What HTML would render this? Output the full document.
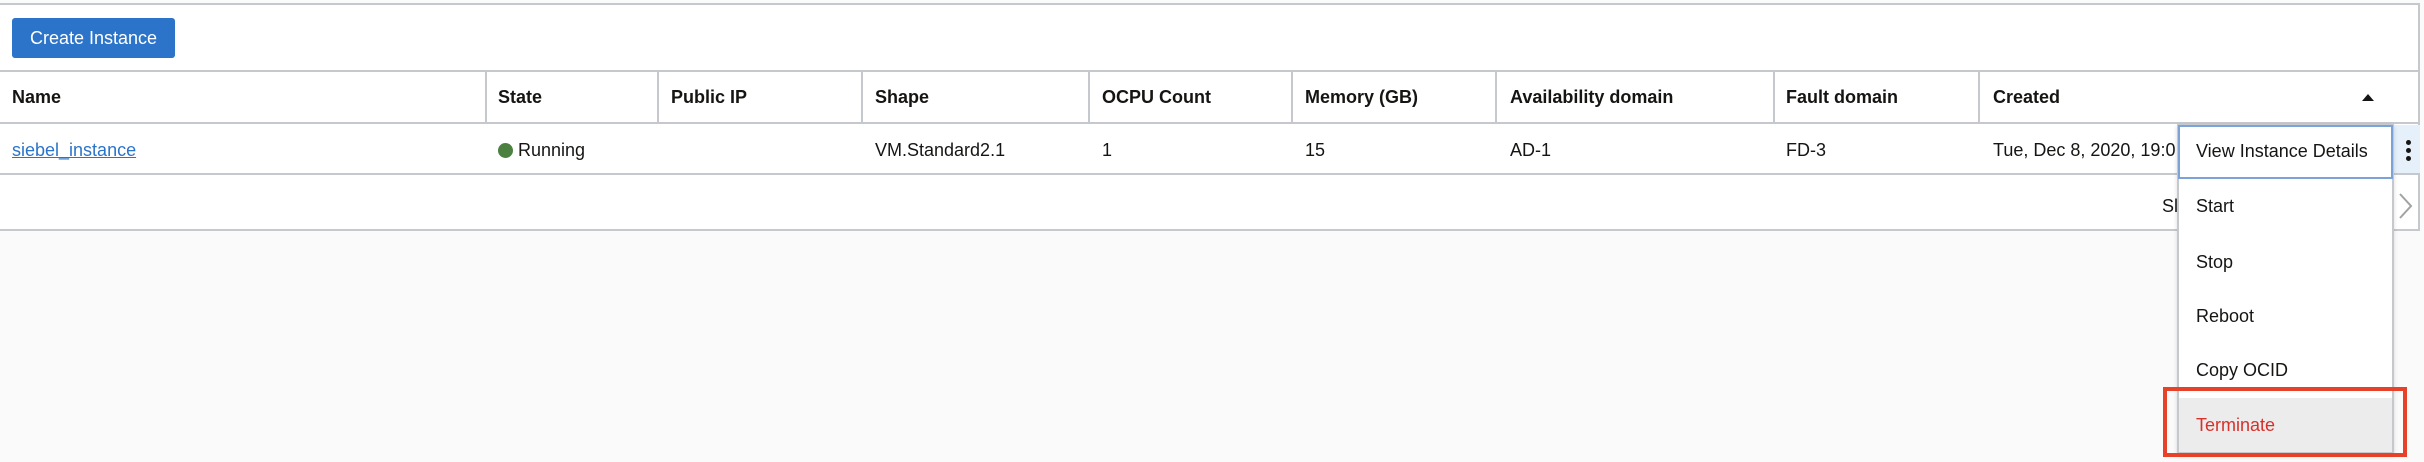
<!DOCTYPE html>
<html><head><style>
*{margin:0;padding:0;box-sizing:border-box}
body{width:2424px;height:462px;background:#fafafa;position:relative;overflow:hidden;font-family:"Liberation Sans",Arial,sans-serif;color:#161513;font-size:18px}
.a{position:absolute}
.t{position:absolute;line-height:20px;white-space:nowrap}
.h{font-weight:bold}
.vl{position:absolute;top:71px;height:52px;width:2px;background:#c5c8cc}
</style></head><body>
<div class="a" style="left:0;top:3px;width:2420px;height:228px;background:#fff;border-top:2px solid #c5c8cc;border-bottom:2px solid #c5c8cc;border-right:2px solid #c5c8cc"></div>
<div class="a" style="left:12px;top:18px;width:163px;height:40px;background:#2b74c9;border-radius:3px;color:#fff;font-size:18px;line-height:40px;text-align:center">Create Instance</div>
<div class="a" style="left:0;top:70px;width:2420px;height:2px;background:#c5c8cc"></div>
<div class="a" style="left:0;top:122px;width:2420px;height:2px;background:#c5c8cc"></div>
<div class="a" style="left:0;top:173px;width:2420px;height:2px;background:#c5c8cc"></div>
<div class="vl" style="left:485px"></div><div class="vl" style="left:657px"></div><div class="vl" style="left:861px"></div><div class="vl" style="left:1088px"></div><div class="vl" style="left:1291px"></div><div class="vl" style="left:1495px"></div><div class="vl" style="left:1773px"></div><div class="vl" style="left:1978px"></div>
<div class="t h" style="left:12px;top:87px">Name</div>
<div class="t h" style="left:498px;top:87px">State</div>
<div class="t h" style="left:671px;top:87px">Public IP</div>
<div class="t h" style="left:875px;top:87px">Shape</div>
<div class="t h" style="left:1102px;top:87px">OCPU Count</div>
<div class="t h" style="left:1305px;top:87px">Memory (GB)</div>
<div class="t h" style="left:1510px;top:87px">Availability domain</div>
<div class="t h" style="left:1786px;top:87px">Fault domain</div>
<div class="t h" style="left:1993px;top:87px">Created</div>
<div class="a" style="left:2362px;top:94px;width:0;height:0;border-left:6px solid transparent;border-right:6px solid transparent;border-bottom:7px solid #161513"></div>
<div class="t" style="left:12px;top:140px;color:#2b74c9;text-decoration:underline">siebel_instance</div>
<div class="a" style="left:498px;top:143px;width:15px;height:15px;border-radius:50%;background:#4b8040"></div>
<div class="t" style="left:518px;top:140px">Running</div>
<div class="t" style="left:875px;top:140px">VM.Standard2.1</div>
<div class="t" style="left:1102px;top:140px">1</div>
<div class="t" style="left:1305px;top:140px">15</div>
<div class="t" style="left:1510px;top:140px">AD-1</div>
<div class="t" style="left:1786px;top:140px">FD-3</div>
<div class="t" style="left:1993px;top:140px">Tue, Dec 8, 2020, 19:0</div>
<div class="t" style="left:2162px;top:196px">Sl</div>
<div class="a" style="left:2393px;top:125px;width:27px;height:48px;background:#e6f0fa"></div>
<div class="a" style="left:2406px;top:140px;width:5px;height:5px;border-radius:50%;background:#161513"></div>
<div class="a" style="left:2406px;top:148px;width:5px;height:5px;border-radius:50%;background:#161513"></div>
<div class="a" style="left:2406px;top:156px;width:5px;height:5px;border-radius:50%;background:#161513"></div>
<svg class="a" style="left:2398px;top:192px" width="16" height="30"><path d="M2 2 L13 14 L2 26" fill="none" stroke="#a0a3a6" stroke-width="2"/></svg>
<div class="a" style="left:2177px;top:124px;width:217px;height:330px;background:#fff;border:2px solid #c5c8cc;box-shadow:0 2px 4px rgba(0,0,0,.15)"></div>
<div class="a" style="left:2178px;top:125px;width:215px;height:54px;border:2px solid #7ba3d8"></div>
<div class="a" style="left:2179px;top:398px;width:213px;height:54px;background:#ececec"></div>
<div class="t" style="left:2196px;top:141px">View Instance Details</div>
<div class="t" style="left:2196px;top:196px">Start</div>
<div class="t" style="left:2196px;top:252px">Stop</div>
<div class="t" style="left:2196px;top:306px">Reboot</div>
<div class="t" style="left:2196px;top:360px">Copy OCID</div>
<div class="t" style="left:2196px;top:415px;color:#d6312b">Terminate</div>
<div class="a" style="left:2163px;top:387px;width:244px;height:70px;border:4px solid #e8412a"></div>
</body></html>
